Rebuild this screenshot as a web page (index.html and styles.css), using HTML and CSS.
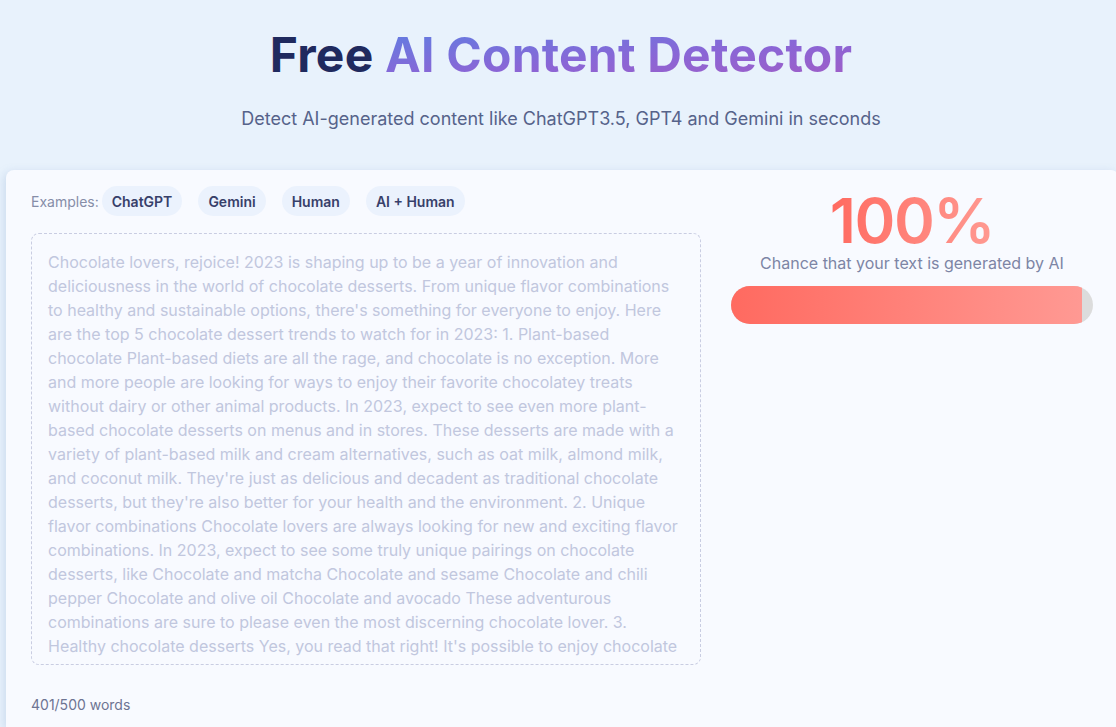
FILE: index.html
```html
<!DOCTYPE html>
<html lang="en">
<head>
<meta charset="utf-8">
<title>Free AI Content Detector</title>
<link rel="stylesheet" href="styles.css">
</head>
<body>
<header class="hero">
  <h1 class="title">Free <span class="grad">AI Content Detector</span></h1>
  <p class="subtitle">Detect AI-generated content like ChatGPT3.5, GPT4 and Gemini in seconds</p>
</header>
<main class="card">
  <section class="left">
    <div class="examples">
      <span class="ex-label">Examples:</span>
      <button class="chip">ChatGPT</button>
      <button class="chip">Gemini</button>
      <button class="chip">Human</button>
      <button class="chip">AI + Human</button>
    </div>
    <div class="editor">Chocolate lovers, rejoice! 2023 is shaping up to be a year of innovation and deliciousness in the world of chocolate desserts. From unique flavor combinations to healthy and sustainable options, there's something for everyone to enjoy. Here are the top 5 chocolate dessert trends to watch for in 2023: 1. Plant-based chocolate Plant-based diets are all the rage, and chocolate is no exception. More and more people are looking for ways to enjoy their favorite chocolatey treats without dairy or other animal products. In 2023, expect to see even more plant-based chocolate desserts on menus and in stores. These desserts are made with a variety of plant-based milk and cream alternatives, such as oat milk, almond milk, and coconut milk. They're just as delicious and decadent as traditional chocolate desserts, but they're also better for your health and the environment. 2. Unique flavor combinations Chocolate lovers are always looking for new and exciting flavor combinations. In 2023, expect to see some truly unique pairings on chocolate desserts, like Chocolate and matcha Chocolate and sesame Chocolate and chili pepper Chocolate and olive oil Chocolate and avocado These adventurous combinations are sure to please even the most discerning chocolate lover. 3. Healthy chocolate desserts Yes, you read that right! It's possible to enjoy chocolate</div>
    <div class="count">401/500 words</div>
  </section>
  <section class="right">
    <div class="score">100%</div>
    <div class="score-label">Chance that your text is generated by AI</div>
    <div class="bar"><div class="bar-fill" style="width: 97%"></div></div>
  </section>
</main>
</body>
</html>
```

FILE: styles.css
```css
* { box-sizing: border-box; }
html, body { margin: 0; padding: 0; }
body {
  background: #e8f2fc;
  font-family: Inter, "Noto Sans", sans-serif;
  width: 1116px;
  height: 727px;
  overflow: hidden;
}
.hero {
  text-align: center;
  padding-top: 26px;
  padding-left: 6px;
  height: 170px;
}
.title {
  margin: 0;
  font-size: 48px;
  font-weight: 700;
  line-height: 58px;
  letter-spacing: 0.2px;
  color: #1f2a5e;
}
.grad {
  background: linear-gradient(175deg, #5c80e2 0%, #8a66d6 55%, #a35cc4 100%);
  -webkit-background-clip: text;
  background-clip: text;
  color: transparent;
}
.subtitle {
  margin: 23px 0 0;
  font-size: 18px;
  line-height: 24px;
  color: #56638a;
}
.card {
  margin-left: 6px;
  width: 1113px;
  height: 557px;
  background: #f8faff;
  border-radius: 8px 8px 0 0;
  box-shadow: -2px 2px 8px rgba(120, 150, 200, 0.25);
  display: flex;
  gap: 30px;
  padding: 16px 26px 0 25px;
}
.left {
  width: 670px;
  flex: none;
}
.examples {
  display: flex;
  align-items: center;
  height: 30px;
  gap: 16px;
}
.ex-label {
  font-size: 14px;
  color: #868da8;
  margin-right: -13px;
}
.chip {
  border: none;
  background: #ebf2fd;
  color: #37406a;
  font-family: Inter, sans-serif;
  font-size: 14px;
  font-weight: 600;
  height: 30px;
  padding: 0 10px;
  border-radius: 15px;
}
.editor {
  margin-top: 17px;
  height: 432px;
  border: 1px dashed #c9cde2;
  border-radius: 8px;
  padding: 16px 16px 0 16px;
  font-size: 16px;
  line-height: 24px;
  color: #c1c7de;
  overflow: hidden;
}
.count {
  margin-top: 30px;
  font-size: 14px;
  line-height: 20px;
  color: #6d7492;
}
.right {
  flex: 1;
  display: flex;
  flex-direction: column;
  align-items: center;
}
.score {
  margin-top: 7px;
  font-size: 62px;
  font-weight: 600;
  line-height: 56px;
  letter-spacing: -1.5px;
  background: linear-gradient(90deg, #ff6a60 0%, #ff9a92 100%);
  -webkit-background-clip: text;
  background-clip: text;
  color: transparent;
}
.score-label {
  font-size: 16px;
  line-height: 20px;
  color: #7d85a5;
  margin-top: 4px;
}
.bar {
  margin-top: 13px;
  width: 100%;
  height: 38px;
  border-radius: 19px;
  background: #dcdcdc;
  overflow: hidden;
}
.bar-fill {
  height: 100%;
  background: linear-gradient(90deg, #ff6a60 0%, #ff9993 100%);
}
```
